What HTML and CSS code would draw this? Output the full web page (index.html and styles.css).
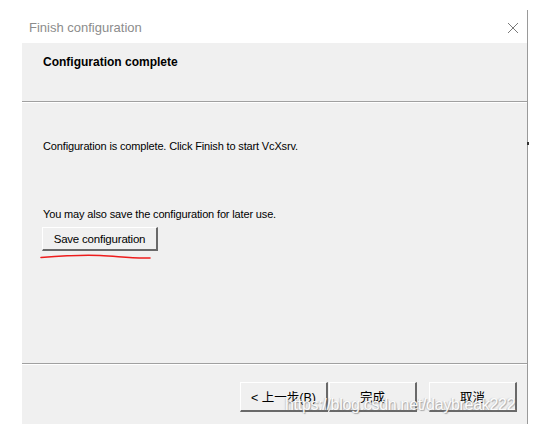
FILE: index.html
```html
<!DOCTYPE html>
<html>
<head>
<meta charset="utf-8">
<link rel="stylesheet" href="styles.css">
</head>
<body>
<div class="screen">
  <div class="window">
    <div class="titlebar">
      <span class="title">Finish configuration</span>
      <svg class="close" width="12" height="12" viewBox="0 0 12 12"><path d="M1 1L11 11M11 1L1 11" stroke="#7a7a7a" stroke-width="1" fill="none"/></svg>
    </div>
    <div class="content">
      <div class="gutter"></div>
      <div class="panel">
        <div class="header">Configuration complete</div>
        <div class="sep"></div>
        <div class="body">
          <p class="text first">Configuration is complete. Click Finish to start VcXsrv.</p>
          <p class="text second">You may also save the configuration for later use.</p>
          <div class="save-wrap">
            <button class="btn save">Save configuration</button>
            <svg class="scribble" width="114" height="8" viewBox="0 0 114 8"><path d="M1 4.5 C 20 3, 40 1.5, 60 2.5 C 80 3.5, 90 5.5, 110 5" stroke="#ee1c1c" stroke-width="1.6" fill="none" stroke-linecap="round"/></svg>
          </div>
        </div>
        <div class="sep"></div>
        <div class="footer">
          <div class="pair">
            <button class="btn big">&lt; 上一步(B)</button>
            <button class="btn big">完成</button>
          </div>
          <button class="btn big">取消</button>
          <span class="watermark">https://blog.csdn.net/daybreak222</span>
        </div>
      </div>
    </div>
  </div>
  <div class="edge">
    <span class="tick"></span>
  </div>
</div>
</body>
</html>
```
FILE: styles.css
```css
html, body {
  margin: 0;
  padding: 0;
  background: #ffffff;
}
body {
  width: 542px;
  height: 424px;
  overflow: hidden;
  font-family: "Liberation Sans", Arial, "Noto Sans CJK SC", sans-serif;
}
.screen {
  display: flex;
  height: 424px;
}
.window {
  width: 527px;
  display: flex;
  flex-direction: column;
}
.titlebar {
  height: 43px;
  display: flex;
  align-items: center;
  justify-content: space-between;
  padding: 12px 8px 0 29px;
  box-sizing: border-box;
  background: #ffffff;
}
.title {
  font-size: 13px;
  color: #8c8c8c;
}
.content {
  flex: 1;
  display: flex;
}
.gutter {
  width: 22px;
  background: #ffffff;
}
.panel {
  flex: 1;
  background: #f0f0f0;
  display: flex;
  flex-direction: column;
}
.header {
  height: 58px;
  box-sizing: border-box;
  padding: 11px 0 0 21px;
  font-weight: bold;
  font-size: 12px;
  line-height: 16px;
  color: #000;
}
.sep {
  height: 1px;
  background: #a0a0a0;
  border-bottom: 1px solid #ffffff;
}
.body {
  height: 260px;
  padding-left: 21px;
  box-sizing: border-box;
}
.text {
  margin: 0;
  font-size: 11px;
  line-height: 14px;
  letter-spacing: -0.15px;
  color: #000;
}
.first {
  margin-top: 36px;
}
.second {
  margin-top: 54px;
}
.save-wrap {
  margin-top: 6px;
  margin-left: -1px;
  position: relative;
  width: 116px;
}
.btn {
  font-family: "Liberation Sans", Arial, "Noto Sans CJK SC", sans-serif;
  background: #f0f0f0;
  border-style: solid;
  border-width: 1px 2px 2px 1px;
  border-color: #ffffff #696969 #696969 #ffffff;
  color: #000;
  padding: 0;
  margin: 0;
  box-sizing: border-box;
  display: flex;
  align-items: center;
  justify-content: center;
}
.save {
  width: 116px;
  height: 24px;
  font-size: 11.5px;
  letter-spacing: -0.2px;
}
.scribble {
  position: absolute;
  left: -2px;
  top: 26px;
}
.footer {
  flex: 1;
  display: flex;
  justify-content: flex-end;
  align-items: flex-start;
  padding: 17px 10px 0 0;
  gap: 12px;
  position: relative;
}
.pair {
  display: flex;
  gap: 1px;
}
.big {
  width: 88px;
  height: 30px;
  font-size: 12.5px;
}
.watermark {
  position: absolute;
  left: 263px;
  top: 31px;
  font-size: 16px;
  letter-spacing: -0.3px;
  color: rgba(255, 255, 255, 0.95);
  text-shadow: 1px 1px 1px rgba(110, 110, 110, 0.55), -1px 0 1px rgba(150, 150, 150, 0.35);
  white-space: nowrap;
  pointer-events: none;
}
.edge {
  width: 1px;
  margin-top: 10px;
  background: #9a9a9a;
  position: relative;
}
.tick {
  position: absolute;
  left: 0;
  top: 132px;
  width: 2px;
  height: 3px;
  background: #333;
}
```
